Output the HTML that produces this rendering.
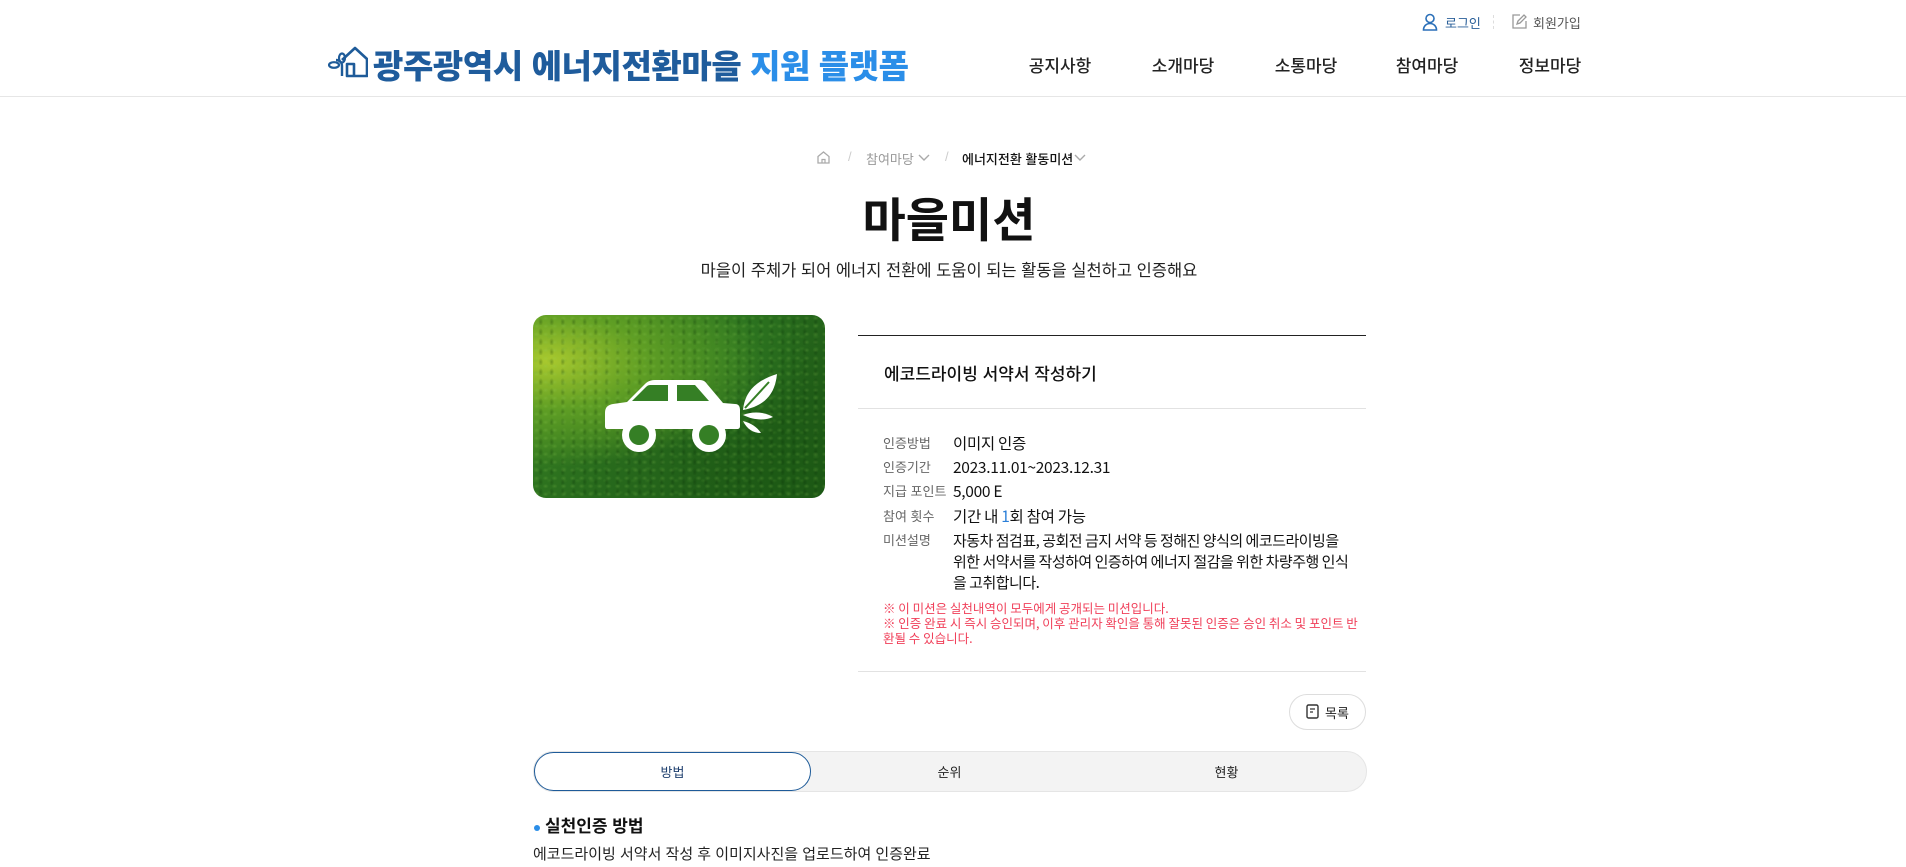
<!DOCTYPE html>
<html><head><meta charset="utf-8"><style>
*{margin:0;padding:0;box-sizing:border-box}
body{width:1906px;height:867px;overflow:hidden;background:#fff;font-family:"Liberation Sans","Noto Sans CJK KR",sans-serif;color:#111;position:relative}
.a{position:absolute;white-space:nowrap}
.hdr{position:absolute;left:0;top:0;width:1906px;height:97px;border-bottom:1px solid #e6e6e6}
.nav{font-size:17px;font-weight:500;color:#222;top:52px;transform:translateX(-50%)}
.lbl{font-size:13px;color:#666;left:883px;line-height:20px}
.val{font-size:15.5px;color:#111;left:953px;line-height:20px;font-family:"Noto Sans CJK KR",sans-serif;letter-spacing:-0.3px}
</style></head><body>
<div class="hdr"></div>
<svg class="a" style="left:1422px;top:13px" width="16" height="18" viewBox="0 0 16 18"><circle cx="8" cy="5.5" r="4" fill="none" stroke="#2a6fb8" stroke-width="1.6"/><path d="M1.5 17c0-4 3-6.5 6.5-6.5s6.5 2.5 6.5 6.5z" fill="none" stroke="#2a6fb8" stroke-width="1.6"/></svg>
<div class="a" style="left:1445px;top:13px;font-size:13px;color:#2a5f99">로그인</div>
<div class="a" style="left:1493px;top:15px;width:1px;height:14px;border-left:1px dashed #ddd"></div>
<svg class="a" style="left:1511px;top:13px" width="17" height="17" viewBox="0 0 17 17"><path d="M9 2H2v13h13V8" fill="none" stroke="#999" stroke-width="1.3"/><path d="M6 11l1-3 6-6 2 2-6 6z" fill="none" stroke="#999" stroke-width="1.3"/></svg>
<div class="a" style="left:1533px;top:13px;font-size:13px;color:#555">회원가입</div>
<svg class="a" style="left:328px;top:44px" width="40" height="34" viewBox="0 0 40 34"><path d="M14 16L27 4l12 11v17H19V20h7v12" fill="none" stroke="#1e5b99" stroke-width="2.6" stroke-linejoin="round"/><path d="M14 32V22c0-4-3-6-6-6" fill="none" stroke="#1e5b99" stroke-width="2.4"/><ellipse cx="6" cy="21" rx="5" ry="2.8" fill="none" stroke="#1e5b99" stroke-width="2.2"/><ellipse cx="14" cy="14" rx="3" ry="4.5" fill="none" stroke="#1e5b99" stroke-width="2.2"/></svg>
<div class="a" style="left:373px;top:40px;font-size:33px;font-weight:900;color:#1f5c9c;letter-spacing:-0.4px">광주광역시 에너지전환마을 <span style="color:#2b8ee8">지원 플랫폼</span></div>
<div class="a nav" style="left:1060px">공지사항</div>
<div class="a nav" style="left:1183px">소개마당</div>
<div class="a nav" style="left:1306px">소통마당</div>
<div class="a nav" style="left:1427px">참여마당</div>
<div class="a nav" style="left:1550px">정보마당</div>
<svg class="a" style="left:816px;top:150px" width="15" height="15" viewBox="0 0 15 15"><path d="M2 6.5L7.5 2 13 6.5V13H2z" fill="none" stroke="#aaa" stroke-width="1.3"/><path d="M6 13V9.5h3V13" fill="none" stroke="#aaa" stroke-width="1.2"/></svg>
<div class="a" style="left:848px;top:149px;font-size:13px;color:#ccc">/</div>
<div class="a" style="left:866px;top:149px;font-size:13px;color:#999">참여마당</div>
<svg class="a" style="left:918px;top:154px" width="12" height="8" viewBox="0 0 12 8"><path d="M1 1l5 5 5-5" fill="none" stroke="#aaa" stroke-width="1.4"/></svg>
<div class="a" style="left:945px;top:149px;font-size:13px;color:#ccc">/</div>
<div class="a" style="left:962px;top:149px;font-size:13px;color:#111;font-weight:500">에너지전환 활동미션</div>
<svg class="a" style="left:1074px;top:154px" width="12" height="8" viewBox="0 0 12 8"><path d="M1 1l5 5 5-5" fill="none" stroke="#aaa" stroke-width="1.4"/></svg>
<div class="a" style="left:0;width:1898px;text-align:center;top:182px;font-size:47px;font-weight:700;color:#111">마을미션</div>
<div class="a" style="left:0;width:1898px;text-align:center;top:257px;font-size:16.5px;color:#222">마을이 주체가 되어 에너지 전환에 도움이 되는 활동을 실천하고 인증해요</div>
<div class="a" style="left:533px;top:315px;width:292px;height:183px;border-radius:13px;overflow:hidden;background:radial-gradient(ellipse at 5% 25%,#a9c92e 0%,#5f9e24 25%,transparent 55%),radial-gradient(circle at 60% 20%,#2f7a22 0,transparent 45%),radial-gradient(circle at 85% 85%,#1d5a15 0,transparent 45%),linear-gradient(135deg,#3f8d26,#27691c 50%,#1b5314)">
<div style="position:absolute;inset:0;opacity:.6;background-image:radial-gradient(ellipse 4px 3px at 40% 40%,rgba(150,210,90,.35),transparent 80%),radial-gradient(ellipse 3px 5px at 70% 70%,rgba(5,40,5,.45),transparent 80%),radial-gradient(ellipse 5px 3px at 20% 80%,rgba(100,170,60,.3),transparent 80%);background-size:9px 8px,11px 10px,14px 12px"></div>
<svg style="position:absolute;left:0;top:0" width="292" height="183" viewBox="0 0 292 183"><path d="M72 98c0-6 3-8 8-9l14-2 18-18c3-3 6-4 10-4h44c4 0 6 1 8 4l16 19 12 1c4 0 5 3 5 6v16c0 2-1 3-3 3H74c-1 0-2-1-2-3z" fill="#fff"/><path d="M99 86l14-14c2-2 3-2 6-2h16v16z" fill="#357f25"/><path d="M144 70h18l14 16h-32z" fill="#357f25"/><circle cx="106" cy="120" r="17" fill="#fff"/><circle cx="106" cy="120" r="10" fill="#357f25"/><circle cx="176" cy="120" r="17" fill="#fff"/><circle cx="176" cy="120" r="10" fill="#357f25"/><path d="M210 95c2-20 15-30 34-36-2 20-12 32-34 36z" fill="#fff"/><path d="M212 93l24-26" stroke="#357f25" stroke-width="2"/><path d="M210 100c10-4 22-3 30 2-8 4-20 3-30-2z" fill="#fff"/><path d="M210 106c8 2 14 6 18 12-8 0-14-4-18-12z" fill="#fff"/></svg>
</div>
<div class="a" style="left:858px;top:335px;width:508px;height:1px;background:#222"></div>
<div class="a" style="left:884px;top:360px;font-size:17px;font-weight:500;color:#111">에코드라이빙 서약서 작성하기</div>
<div class="a" style="left:858px;top:408px;width:508px;height:1px;background:#e2e2e2"></div>
<div class="a lbl" style="top:434px">인증방법</div><div class="a val" style="top:433px">이미지 인증</div>
<div class="a lbl" style="top:458px">인증기간</div><div class="a val" style="top:457px">2023.11.01~2023.12.31</div>
<div class="a lbl" style="top:482px">지급 포인트</div><div class="a val" style="top:481px">5,000 E</div>
<div class="a lbl" style="top:507px">참여 횟수</div><div class="a val" style="top:506px">기간 내 <span style="color:#2b7fd8">1</span>회 참여 가능</div>
<div class="a lbl" style="top:531px">미션설명</div>
<div class="a val" style="top:530px;white-space:normal;word-break:break-all;width:400px;line-height:21px;font-size:15px;letter-spacing:-0.5px">자동차 점검표, 공회전 금지 서약 등 정해진 양식의 에코드라이빙을 위한 서약서를 작성하여 인증하여 에너지 절감을 위한 차량주행 인식을 고취합니다.</div>
<div class="a" style="left:883px;top:600px;width:475px;white-space:normal;word-break:break-all;font-size:12.5px;line-height:15px;color:#f0405a;font-family:'Noto Sans CJK KR',sans-serif">※ 이 미션은 실천내역이 모두에게 공개되는 미션입니다.<br>※ 인증 완료 시 즉시 승인되며, 이후 관리자 확인을 통해 잘못된 인증은 승인 취소 및 포인트 반환될 수 있습니다.</div>
<div class="a" style="left:858px;top:671px;width:508px;height:1px;background:#e2e2e2"></div>
<div class="a" style="left:1289px;top:694px;width:77px;height:36px;border:1px solid #ddd;border-radius:18px"></div>
<svg class="a" style="left:1306px;top:704px" width="13" height="15" viewBox="0 0 13 15"><rect x="1" y="1" width="11" height="13" rx="1.5" fill="none" stroke="#333" stroke-width="1.4"/><path d="M4 5h5M4 8h3" stroke="#333" stroke-width="1.3"/></svg>
<div class="a" style="left:1325px;top:703px;font-size:13px;color:#222">목록</div>
<div class="a" style="left:533px;top:751px;width:834px;height:41px;border-radius:21px;background:#f3f3f3;border:1px solid #e5e5e5"></div>
<div class="a" style="left:534px;top:752px;width:277px;height:39px;border-radius:20px;background:#fff;border:1.5px solid #1e5b99"></div>
<div class="a" style="left:534px;width:277px;text-align:center;top:762px;font-size:13px;color:#1e3f6e">방법</div>
<div class="a" style="left:811px;width:277px;text-align:center;top:762px;font-size:13px;color:#222">순위</div>
<div class="a" style="left:1088px;width:277px;text-align:center;top:762px;font-size:13px;color:#222">현황</div>
<div class="a" style="left:534px;top:825px;width:6px;height:6px;border-radius:50%;background:#2b8ee8"></div>
<div class="a" style="left:545px;top:812px;font-size:17px;font-weight:700;color:#111">실천인증 방법</div>
<div class="a" style="left:533px;top:843px;font-size:15px;color:#222">에코드라이빙 서약서 작성 후 이미지사진을 업로드하여 인증완료</div>
</body></html>
